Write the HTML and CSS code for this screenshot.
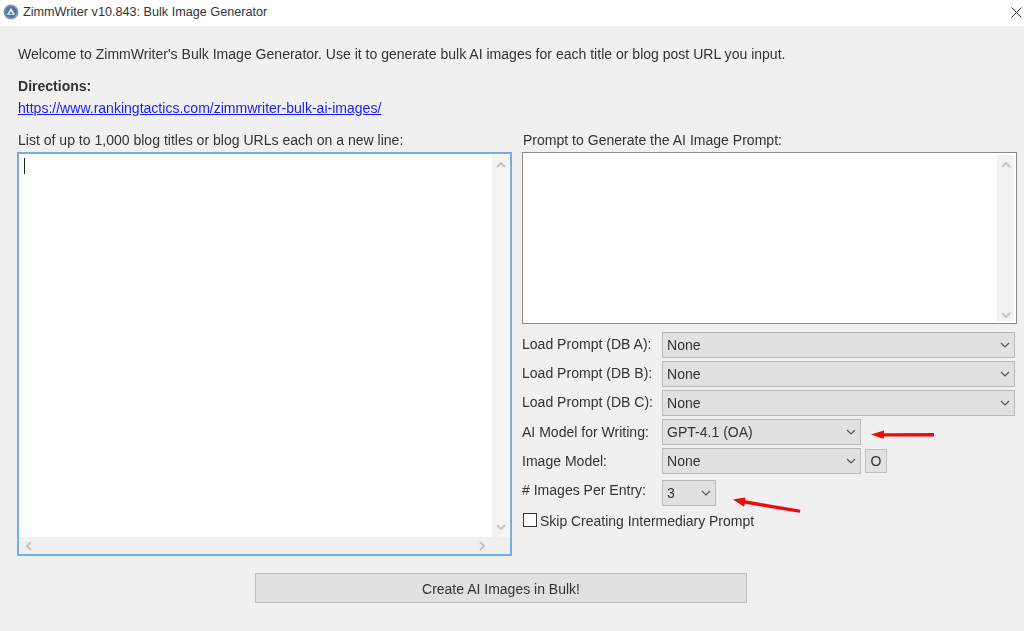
FILE: index.html
```html
<!DOCTYPE html>
<html lang="en">
<head>
<meta charset="utf-8">
<title>ZimmWriter v10.843: Bulk Image Generator</title>
<link rel="stylesheet" href="styles.css">
</head>
<body>
<div class="window">
  <header class="titlebar">
    <svg class="app-icon" viewBox="0 0 16 16" width="16" height="16"><circle cx="8" cy="8" r="7.5" fill="#7f9ab8"/><circle cx="8" cy="8" r="5.8" fill="#4f759f"/><path d="M8 3.8 12.3 10.8H3.7Z" fill="#e4eaf2"/><path d="M8 7.2 9.8 10H6.2Z" fill="#5b80a8"/></svg>
    <span class="title">ZimmWriter v10.843: Bulk Image Generator</span>
    <svg class="close" viewBox="0 0 11 11" width="11" height="11"><path d="M.5.5 10.5 10.5M10.5.5.5 10.5" stroke="#333" stroke-width="1" fill="none"/></svg>
  </header>
  <main class="content">
    <p class="welcome">Welcome to ZimmWriter's Bulk Image Generator. Use it to generate bulk AI images for each title or blog post URL you input.</p>
    <p class="directions">Directions:</p>
    <a class="link" href="#">https://www.rankingtactics.com/zimmwriter-bulk-ai-images/</a>
    <div class="columns">
      <section class="left">
        <label class="field-label">List of up to 1,000 blog titles or blog URLs each on a new line:</label>
        <div class="textbox focused">
          <span class="caret"></span>
          <div class="vscroll">
            <svg class="chev" viewBox="0 0 10 6" width="10" height="6"><path d="M1 5 5 1 9 5" class="scroll-stroke"/></svg>
            <svg class="chev" viewBox="0 0 10 6" width="10" height="6"><path d="M1 1 5 5 9 1" class="scroll-stroke"/></svg>
          </div>
          <div class="hscroll">
            <svg viewBox="0 0 6 10" width="6" height="10"><path d="M5 1 1 5 5 9" class="scroll-stroke"/></svg>
            <svg viewBox="0 0 6 10" width="6" height="10"><path d="M1 1 5 5 1 9" class="scroll-stroke"/></svg>
          </div>
        </div>
      </section>
      <section class="right">
        <label class="field-label">Prompt to Generate the AI Image Prompt:</label>
        <div class="textbox prompt">
          <div class="vscroll">
            <svg class="chev" viewBox="0 0 10 6" width="10" height="6"><path d="M1 5 5 1 9 5" class="scroll-stroke"/></svg>
            <svg class="chev" viewBox="0 0 10 6" width="10" height="6"><path d="M1 1 5 5 9 1" class="scroll-stroke"/></svg>
          </div>
        </div>
        <div class="form">
          <div class="row"><span class="row-label">Load Prompt (DB A):</span><div class="select full"><span>None</span><svg viewBox="0 0 10 6" width="10" height="6"><path d="M1 1 5 5 9 1" class="drop-stroke"/></svg></div></div>
          <div class="row"><span class="row-label">Load Prompt (DB B):</span><div class="select full"><span>None</span><svg viewBox="0 0 10 6" width="10" height="6"><path d="M1 1 5 5 9 1" class="drop-stroke"/></svg></div></div>
          <div class="row"><span class="row-label">Load Prompt (DB C):</span><div class="select full"><span>None</span><svg viewBox="0 0 10 6" width="10" height="6"><path d="M1 1 5 5 9 1" class="drop-stroke"/></svg></div></div>
          <div class="row row-low"><span class="row-label">AI Model for Writing:</span><div class="select mid"><span>GPT-4.1 (OA)</span><svg viewBox="0 0 10 6" width="10" height="6"><path d="M1 1 5 5 9 1" class="drop-stroke"/></svg></div></div>
          <div class="row row-low"><span class="row-label">Image Model:</span><div class="select mid"><span>None</span><svg viewBox="0 0 10 6" width="10" height="6"><path d="M1 1 5 5 9 1" class="drop-stroke"/></svg></div><button class="mini">O</button></div>
          <div class="row row-count"><span class="row-label">#&nbsp;Images Per Entry:</span><div class="select small"><span>3</span><svg viewBox="0 0 10 6" width="10" height="6"><path d="M1 1 5 5 9 1" class="drop-stroke"/></svg></div></div>
          <div class="check-row"><span class="checkbox"></span><span class="check-text">Skip Creating Intermediary Prompt</span></div>
        </div>
      </section>
    </div>
    <div class="actions"><button class="create">Create AI Images in Bulk!</button></div>
  </main>
  <svg class="arrow arrow-one" viewBox="0 0 64 10" width="64" height="10"><path d="M0 4.5 13 0.6 13 3.2 63 3 63 6.4 13 6.4 12.5 8.8Z" fill="#f00a0a"/></svg>
  <svg class="arrow arrow-two" viewBox="0 0 68 16" width="68" height="16"><path d="M0 2.5 12 0.5 12.5 3.2 67.5 12.8 66.8 15.8 12 6.8 11 9.8Z" fill="#f00a0a"/></svg>
</div>
</body>
</html>
```

FILE: styles.css
```css
* { box-sizing: border-box; }
html, body { margin: 0; padding: 0; }
body { width: 1024px; height: 631px; overflow: hidden; background: #f0f0f0; font-family: "Liberation Sans", Arial, sans-serif; font-size: 14.04px; color: #333; }
p { margin: 0; }
.window { position: relative; width: 1024px; height: 631px; filter: blur(0.3px); }
.titlebar { height: 26px; background: #fff; display: flex; align-items: center; padding: 0 2px 2px 3px; }
.app-icon { flex: none; }
.title { margin-left: 4px; font-size: 12.65px; color: #333; flex: 1; }
.close { flex: none; }
.content { padding: 20px 7px 0 18px; }
.welcome { line-height: 16px; height: 16px; }
.directions { font-weight: bold; line-height: 16px; margin-top: 16px; }
.link { display: block; line-height: 16px; margin-top: 6px; color: #1a1aff; text-decoration: underline; }
.columns { display: grid; grid-template-columns: 495px 495px; column-gap: 10px; margin: 16px 0 0 -1px; }
.field-label { display: block; height: 20px; line-height: 16px; padding-left: 1px; }
.textbox { position: relative; background: #fff; border: 1px solid #7a7a7a; }
.textbox.focused { height: 404px; border: 2px solid #74aee6; }
.textbox.prompt { height: 172px; border-color: #8a8a8a; }
.caret { position: absolute; left: 5px; top: 4px; width: 1px; height: 16px; background: #222; }
.vscroll { position: absolute; right: 2px; top: 2px; bottom: 2px; width: 17px; background: #f2f2f2; display: flex; flex-direction: column; justify-content: space-between; align-items: center; padding: 7px 0 3px; }
.focused .vscroll { top: 1px; right: 1px; bottom: 16px; background: #f4f4f4; padding-bottom: 8px; }
.hscroll { position: absolute; left: 0; right: 0; bottom: 0; height: 17px; background: #f0f0f0; display: flex; justify-content: space-between; align-items: center; padding: 0 25px 0 7px; }
.scroll-stroke { fill: none; stroke: #c4c4c4; stroke-width: 2; }
.drop-stroke { fill: none; stroke: #555; stroke-width: 1.2; }
.form { display: flex; flex-direction: column; margin-top: 8px; }
.row { display: flex; align-items: center; height: 26px; margin-bottom: 3px; }
.row-label { width: 140px; flex: none; padding-bottom: 2px; }
.row-low .row-label { padding-bottom: 0; }
.select { height: 26px; background: #e1e1e1; border: 1px solid #b9b9b9; display: flex; align-items: center; justify-content: space-between; padding: 0 4px; }
.mini { width: 22px; height: 24px; margin-left: 4px; padding: 0; background: #e1e1e1; border: 1px solid #c0c0c0; font: 14px "Liberation Sans", Arial, sans-serif; color: #333; }
.full { width: 353px; }
.mid { width: 199px; }
.small { width: 54px; }
.row-count { margin-top: 3px; margin-bottom: 0; }
.row-count .row-label { padding-bottom: 6px; }
.row-count .select span { padding-bottom: 1px; }
.check-row { display: flex; align-items: center; gap: 3px; margin-top: 7px; height: 14px; padding-left: 1px; }
.checkbox { width: 14px; height: 14px; background: #fff; border: 1px solid #333; flex: none; }
.check-text { padding-top: 1px; font-size: 13.96px; }
.actions { display: flex; margin: 17px 0 0 237px; }
.create { width: 492px; height: 30px; padding: 2px 0 0; background: #e1e1e1; border: 1px solid #bdbdbd; font: 14px "Liberation Sans", Arial, sans-serif; color: #333; }
.arrow { position: absolute; }
.arrow-one { left: 871px; top: 430px; }
.arrow-two { left: 733px; top: 497px; }
```
